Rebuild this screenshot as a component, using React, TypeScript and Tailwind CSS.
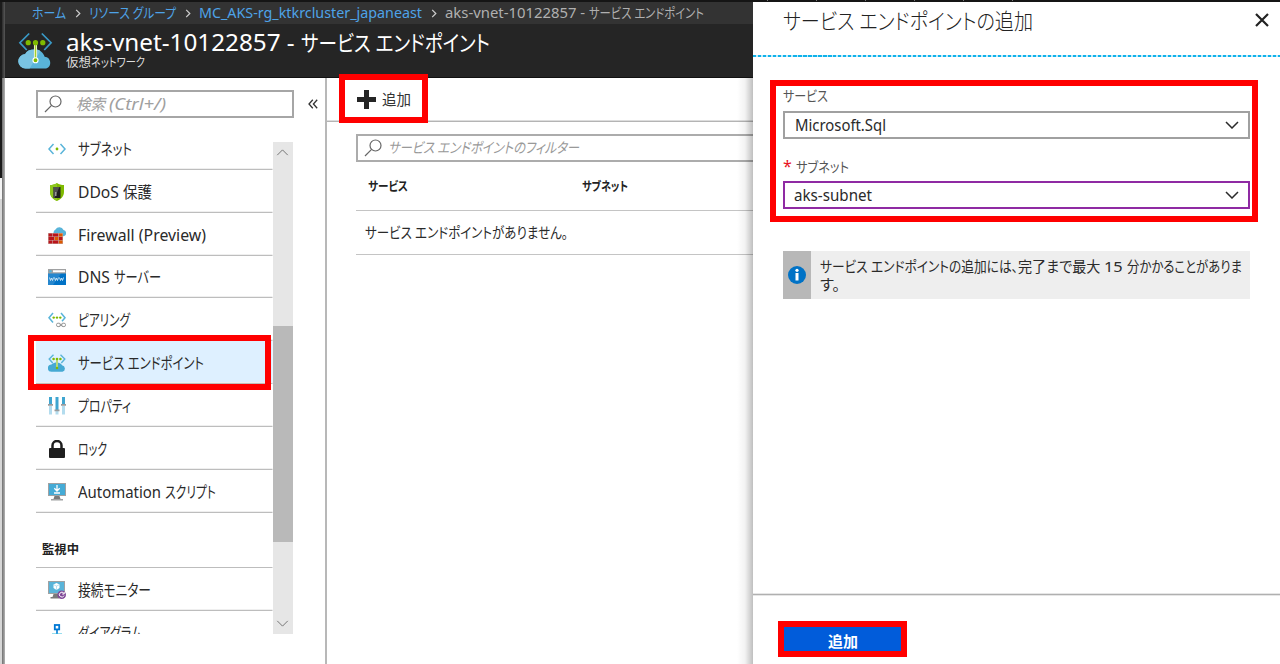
import { useLayoutEffect, useRef, type ReactNode } from "react";

/** A run of text that is condensed or widened to fill the given width. */
function Fit({ w, children, className = "" }: { w: number; children: string; className?: string }) {
  const outer = useRef<HTMLSpanElement>(null);
  const inner = useRef<HTMLSpanElement>(null);
  useLayoutEffect(() => {
    if (!outer.current || !inner.current) return;
    inner.current.style.transform = "none";
    const natural = inner.current.getBoundingClientRect().width;
    outer.current.style.width = `${w}px`;
    inner.current.style.transform = `scaleX(${w / natural})`;
  }, [w, children]);
  return (
    <span ref={outer} className={`inline-block shrink-0 whitespace-pre ${className}`}>
      <span ref={inner} className="inline-block origin-left">
        {children}
      </span>
    </span>
  );
}

function Chevron({ className }: { className: string }) {
  return (
    <svg viewBox="0 0 14 8" className={className} fill="none" stroke="currentColor">
      <path d="M1 1l6 6 6-6" />
    </svg>
  );
}

function SearchIcon() {
  return (
    <svg viewBox="0 0 18 18" className="size-[18px] shrink-0" fill="none" stroke="#666" strokeWidth="1.2">
      <circle cx="11.500" cy="6.500" r="5.500" />
      <path d="M7.600 10.400L1 17" />
    </svg>
  );
}

function EndpointLogo({ className }: { className: string }) {
  return (
    <svg viewBox="0 0 36 38" className={className}>
      <path d="M8 37a7.400 7.400 0 0 1-.6-14.800C9 19 12 17.500 17 17.500c6 0 9 3.500 10.400 7.300A6.300 6.300 0 0 1 29 37z" fill="#59b4d9" />
      <path d="M8 37a7.400 7.400 0 0 1-.6-14.800C9 19 12 17.500 17 17.500c3 0 4.500.5 6 1.500L12 37z" fill="#7ac3e1" />
      <path d="M11.500 1L2 10.500l7 7.500M24.500 1l9.500 9.500-7 7.500" fill="none" stroke="#3999c6" strokeWidth="1.800" />
      <path d="M18 11v17" stroke="#f0f8dc" strokeWidth="3.200" />
      <path d="M18 11v17" stroke="#a4cf30" strokeWidth="1.400" />
      <g fill="#7fba00">
        <circle cx="10.500" cy="10.500" r="2.700" />
        <circle cx="18" cy="10.500" r="2.700" />
        <circle cx="25.500" cy="10.500" r="2.700" />
      </g>
      <circle cx="18" cy="28.500" r="2.600" fill="#7fba00" stroke="#fff" strokeWidth="1.200" />
    </svg>
  );
}

function Icon18({ children }: { children: ReactNode }) {
  return (
    <svg viewBox="0 0 18 18" className="size-[18px] shrink-0" fill="none">
      {children}
    </svg>
  );
}

const icons = {
  subnet: (
    <Icon18>
      <path d="M5.500 4L1 9l4.500 5M12.500 4L17 9l-4.500 5" stroke="#59b4d9" strokeWidth="1.500" />
      <circle cx="9" cy="9" r="1.400" fill="#7fba00" />
    </Icon18>
  ),
  shield: (
    <Icon18>
      <path d="M9 0c2 1.500 4.500 2 7 2v7c0 4.500-3 7-7 9-4-2-7-4.500-7-9V2c2.500 0 5-.5 7-2z" fill="#7fba00" />
      <path d="M9 0v18c-4-2-7-4.500-7-9V2c2.500 0 5-.5 7-2z" fill="#8dc71e" />
      <path d="M5.500 4h7v11h-7z" fill="#1e1e1e" />
      <path d="M5.500 4h6l-5 11h-1z" fill="#505050" />
      <path d="M7 9h1.500v4H7z" fill="#999" />
    </Icon18>
  ),
  firewall: (
    <Icon18>
      <path d="M8 10a3.500 3.500 0 0 1-.5-6.500A4.500 4.500 0 0 1 15.500 4a3.200 3.200 0 0 1 0 6.300z" fill="#59b4d9" />
      <path d="M0 7h15v11H0z" fill="#c9a9a4" />
      <path d="M.6 7.600h3.800v2.900H.6zM5 7.600h5.300v2.900H5zM.6 11.100h5.600v2.900H.6zM11 11.100h3.500v2.900H11zM.6 14.600h3.800v2.900H.6zM5 14.600h5.300v2.900H5z" fill="#ba141a" />
      <path d="M11 7.600h3.500v2.900H11zM6.800 11.100h3.600v2.900H6.800zM11 14.600h3.500v2.900H11z" fill="#dd5900" />
    </Icon18>
  ),
  dns: (
    <Icon18>
      <path d="M0 1h18v16H0z" fill="#0072c6" />
      <path d="M0 1h18v4.500H0z" fill="#a0a1a2" />
      <path d="M5 2.200h12v2H5z" fill="#fff" />
      <circle cx="2.500" cy="3.200" r="1.200" fill="#59b4d9" />
      <path d="M0 5.500h13L5 17H0z" fill="#fff" opacity=".15" />
      <path d="M1.500 9.500l1 3 1-2.500 1 2.500 1-3M6.500 9.500l1 3 1-2.500 1 2.500 1-3M11.500 9.500l1 3 1-2.500 1 2.500 1-3" stroke="#d5ebf8" strokeWidth=".9" />
    </Icon18>
  ),
  peering: (
    <Icon18>
      <path d="M5 2L1 6.700 5 11.500M13 2l4 4.700-3 3.600" stroke="#59b4d9" strokeWidth="1.500" />
      <g fill="#7fba00">
        <circle cx="5.700" cy="6.600" r="1.200" />
        <circle cx="9" cy="6.600" r="1.200" />
        <circle cx="12.300" cy="6.600" r="1.200" />
      </g>
      <rect x="8.500" y="12.200" width="4" height="3.400" rx="1.500" stroke="#999" />
      <rect x="13.500" y="12.200" width="4" height="3.400" rx="1.500" stroke="#999" />
      <path d="M11.500 14h3" stroke="#888" />
    </Icon18>
  ),
  endpoint: (
    <Icon18>
      <path d="M3.500 17.800a3.500 3.500 0 0 1 0-7.200C5 9 7 8.500 9 8.500s4 1 5 2.700a3.400 3.400 0 0 1 .5 6.600z" fill="#45a9d3" />
      <path d="M5.500.8L1.200 5l3.500 4M12.500.8L16.800 5l-3.500 4" stroke="#59b4d9" strokeWidth="1.400" />
      <path d="M9 5v9" stroke="#b8d97a" strokeWidth="2" />
      <g fill="#7fba00">
        <circle cx="5.600" cy="5" r="1.300" />
        <circle cx="9" cy="5" r="1.300" />
        <circle cx="12.400" cy="5" r="1.300" />
        <circle cx="9" cy="14" r="1.300" />
      </g>
    </Icon18>
  ),
  properties: (
    <Icon18>
      <path d="M1 9h3v8.500H1zM7.500 14h3v3.500h-3zM14 9h3v8.500h-3z" fill="#b3dcee" />
      <path d="M1 0h3v7.500H1zM7.500 0h3v13h-3zM14 0h3v7.500h-3z" fill="#3fa5d0" />
      <path d="M0 7h5v1.800H0zM6.500 12.500h5v1.800h-5zM13 7h5v1.800h-5z" fill="#9a9b9c" />
    </Icon18>
  ),
  lock: (
    <Icon18>
      <rect x="1" y="8" width="16" height="10" rx="1" fill="#1e1e1e" />
      <path d="M4.500 9V5.500a4.500 4.500 0 0 1 9 0V9" stroke="#1e1e1e" strokeWidth="2.500" />
    </Icon18>
  ),
  script: (
    <Icon18>
      <path d="M0 0h18v13H0z" fill="#a0a1a2" />
      <path d="M1 1h16v11H1z" fill="#45abd6" />
      <path d="M6.500 13h5l1 3h-7z" fill="#7a7a7a" />
      <path d="M3 16h12v1.500H3z" fill="#a0a1a2" />
      <path d="M9 2v5.500M6.300 5.200L9 8l2.700-2.800M6 10h6" stroke="#fff" strokeWidth="1.300" />
    </Icon18>
  ),
  monitor: (
    <Icon18>
      <path d="M0 0h17v13H0z" fill="#a0a1a2" />
      <path d="M1 1h15v11H1z" fill="#59b4d9" />
      <path d="M5.500 13h5l1 3h-7zM2.500 16h9v1.500h-9z" fill="#7a7a7a" />
      <path d="M8.500 2l3 1.500v3.500l-3 2-3-2V3.500z" fill="#fff" />
      <path d="M5.800 3.800l2.700 1.300 2.700-1.300M8.500 5v4" stroke="#9fd3ea" strokeWidth=".7" />
      <circle cx="13.700" cy="13.700" r="4.300" fill="#804998" />
      <path d="M15.800 12.300a2.400 2.400 0 1 0 .2 2.300M16.200 11v2h-2" stroke="#fff" strokeWidth="1" />
    </Icon18>
  ),
  diagram: (
    <Icon18>
      <rect x="6.800" y="1" width="4.400" height="4.400" stroke="#0078d4" strokeWidth="1.800" />
      <path d="M9 6v4" stroke="#0078d4" strokeWidth="1.600" />
      <path d="M4 10.500h10" stroke="#32bedd" strokeWidth="2" />
    </Icon18>
  ),
};

type Run = [text: string, width: number];
type Item = { icon: keyof typeof icons; runs: Run[]; height: string; selected?: boolean };

const menu: Item[] = [
  { icon: "subnet", runs: [["サブネット", 54]], height: "h-[43px]" },
  { icon: "shield", runs: [["DDoS ", 45], ["保護", 29]], height: "h-[43px]" },
  { icon: "firewall", runs: [["Firewall (Preview)", 128]], height: "h-[43px]" },
  { icon: "dns", runs: [["DNS ", 36], ["サーバー", 47]], height: "h-[42px]" },
  { icon: "peering", runs: [["ピアリング", 52]], height: "h-[43px]" },
  { icon: "endpoint", runs: [["サービス エンドポイント", 126]], height: "h-[43px]", selected: true },
  { icon: "properties", runs: [["プロパティ", 53]], height: "h-[43px]" },
  { icon: "lock", runs: [["ロック", 29]], height: "h-[43px]" },
  { icon: "script", runs: [["Automation ", 87], ["スクリプト", 51]], height: "h-[43px]" },
];

const monitoring: Item[] = [
  { icon: "monitor", runs: [["接続モニター", 73]], height: "h-[43px]" },
  { icon: "diagram", runs: [["ダイアグラム", 64]], height: "h-[43px]" },
];

function MenuRow({ item }: { item: Item }) {
  return (
    <li
      className={`relative flex shrink-0 items-center border-b border-[#bdbdbd] pt-px pl-3 text-[15.500px] leading-5 text-[#2a2a2a] shadow-[0_-1px_0_#efefef_inset] ${item.height} ${item.selected ? "bg-[#def0ff]" : ""}`}
    >
      {icons[item.icon]}
      <span className="ml-3 flex">
        {item.runs.map(([text, width]) => (
          <Fit key={text} w={width}>
            {text}
          </Fit>
        ))}
      </span>
      {item.selected && <span className="absolute -top-[6px] -right-[-2px] -left-[8px] h-[55px] border-6 border-[#f00]" />}
    </li>
  );
}

function Sidebar() {
  return (
    <nav className="flex w-[321.500px] shrink-0 flex-col border-r-2 border-[#b8b8b8] bg-white pl-[30.500px]">
      <div className="mt-[12px] flex items-center">
        <div className="flex h-[28px] w-[258px] items-center border-2 border-[#a6a6a6] pl-[6px]">
          <SearchIcon />
          <span className="ml-[14px] flex text-[15.500px] leading-5 text-[#a0a0a0] italic">
            <Fit w={33}>検索 </Fit>
            <Fit w={57}>(Ctrl+/)</Fit>
          </span>
        </div>
        <svg viewBox="0 0 10 10" className="ml-[14.500px] size-[10px]" fill="none" stroke="#333" strokeWidth="1.300">
          <path d="M4.800.8L1 5l3.800 4.200M9.200.8L5.400 5l3.800 4.200" />
        </svg>
      </div>
      <div className="mt-[9px] flex h-[507px]">
        <div className="h-[507px] w-[237px] [clip-path:inset(0_0_0_-20px)]">
          <ul className="flex flex-col">
            {menu.map((item) => (
              <MenuRow key={item.icon} item={item} />
            ))}
          </ul>
          <h2 className="flex h-[55px] items-end border-b border-[#bdbdbd] pb-[8px] pl-[6px] text-[12.500px] leading-[18px] font-bold text-[#222]">
            <Fit w={37}>監視中</Fit>
          </h2>
          <ul className="flex flex-col">
            {monitoring.map((item) => (
              <MenuRow key={item.icon} item={item} />
            ))}
          </ul>
        </div>
        <div className="mt-[15px] flex h-[492px] w-[20.500px] flex-col items-center bg-[#e6e6e6] text-[#666]">
          <Chevron className="mt-[7px] h-[7px] w-[13px] shrink-0 rotate-180" />
          <div className="mt-[170px] h-[216px] w-full bg-[#b9b9b9]" />
          <Chevron className="mt-[78px] h-[7px] w-[13px] shrink-0" />
        </div>
      </div>
    </nav>
  );
}

function Content() {
  return (
    <main className="relative min-w-0 flex-1 bg-white">
      <div className="relative flex h-[44px] items-center border-b border-[#b4b4b4] pl-[30px] shadow-[0_-1px_0_#ddd_inset]">
        <svg viewBox="0 0 19 19" className="size-[19px]" fill="#252525">
          <path d="M7 0h5v7h7v5h-7v7H7v-7H0V7h7z" />
        </svg>
        <Fit w={29} className="-mt-[2px] ml-[6.500px] text-[14.500px] leading-5 text-[#333]">追加</Fit>
        <span className="absolute -top-[4px] left-[12.500px] h-[49px] w-[89px] border-6 border-[#f00]" />
      </div>
      <div className="ml-[29.500px]">
        <div className="mt-[12px] flex h-[28px] items-center border-2 border-r-0 border-[#acacac] pl-[6px] text-[14.500px] text-[#999] italic">
          <SearchIcon />
          <Fit w={191} className="ml-[6px]">サービス エンドポイントのフィルター</Fit>
        </div>
        <div className="flex h-[49px] items-center border-b border-[#c4c4c4] pt-[2px] pl-3 text-[12.500px] font-bold text-[#222]">
          <Fit w={40}>サービス</Fit>
          <Fit w={46} className="ml-[174px]">サブネット</Fit>
        </div>
        <div className="flex h-[44px] items-center border-b border-[#c4c4c4] pt-px pl-[9px] text-[14.500px] text-[#2a2a2a]">
          <Fit w={203}>サービス エンドポイントがありません。</Fit>
        </div>
      </div>
      <div className="absolute inset-y-0 right-0 w-[16px] bg-linear-to-r from-transparent via-black/5 to-black/25" />
    </main>
  );
}

function Select({ value, width, className }: { value: string; width: number; className: string }) {
  return (
    <div className={`flex h-[28px] items-center justify-between border-2 pr-[9px] text-[15.500px] leading-5 text-[#2a2a2a] ${className}`}>
      <Fit w={width} className="-mt-px">{value}</Fit>
      <Chevron className="h-[8px] w-[14px] [stroke-width:1.500]" />
    </div>
  );
}

function AddPanel() {
  return (
    <aside className="flex w-[527px] shrink-0 flex-col bg-white">
      <header className="flex h-[53px] items-start justify-between pt-[3px] pr-[11px] pl-[30px]">
        <Fit w={250} className="text-[22px] leading-[30px] font-light text-[#222]">サービス エンドポイントの追加</Fit>
        <svg viewBox="0 0 14 14" className="mt-[8px] size-[14px]" stroke="#222" strokeWidth="2.200">
          <path d="M1 1l12 12M13 1L1 13" />
        </svg>
      </header>
      <div className="h-[2px] bg-[repeating-linear-gradient(90deg,#10b2ea_0_3.500px,#bfeafa_3.500px_5px)]" />
      <div className="px-[30px]">
        <div className="relative pt-[31px]">
          <div className="flex h-[23px] items-start text-[14px] leading-[18px] text-[#555]">
            <Fit w={45} className="-mt-px">サービス</Fit>
          </div>
          <Select value="Microsoft.Sql" width={91} className="border-[#a0a0a0] pl-[10px]" />
          <div className="mt-[19px] flex h-[23px] items-start text-[14px] leading-[18px] text-[#555]">
            <span className="-mt-[2px] w-[13px] text-[16px] leading-5 text-[#e81123]">*</span>
            <Fit w={53}>サブネット</Fit>
          </div>
          <Select value="aks-subnet" width={78} className="border-[#8f2aa3] pl-[9px]" />
          <span className="absolute top-[23px] -right-[8px] -left-[13px] h-[142px] border-6 border-[#f00]" />
        </div>
        <div className="mt-[42px] flex h-[48px] bg-[#eee]">
          <div className="flex w-[28px] items-center justify-center bg-[#b8b8b8]">
            <svg viewBox="0 0 18 18" className="-mt-px size-[18px]">
              <circle cx="9" cy="9" r="9" fill="#0072c6" />
              <circle cx="9" cy="4.300" r="1.600" fill="#fff" />
              <path d="M7.500 7h3v7.500h-3z" fill="#fff" />
            </svg>
          </div>
          <div className="flex flex-col pt-[6px] pl-[9px] text-[14.500px] leading-[18px] text-[#2a2a2a]">
            <div className="flex">
              <Fit w={198}>サービス エンドポイントの追加には、</Fit>
              <Fit w={86}>完了まで最大 </Fit>
              <Fit w={23}>15 </Fit>
              <Fit w={115}>分かかることがありま</Fit>
            </div>
            <Fit w={20}>す。</Fit>
          </div>
        </div>
      </div>
      <footer className="mt-auto h-[70px] border-t border-[#b0b0b0] pt-[27px] pl-[25px] shadow-[0_1px_0_#e6e6e6_inset,0_-1px_0_#e6e6e6]">
        <button className="-mt-px flex h-[36px] w-[129px] items-center justify-center border-6 border-[#f00] bg-[#015cda] pt-[3px] text-[14.500px] leading-5 font-bold text-white">
          <Fit w={30}>追加</Fit>
        </button>
      </footer>
    </aside>
  );
}

function Separator() {
  return (
    <svg viewBox="0 0 6 10" className="mx-[8.500px] h-[9px] w-[6px] shrink-0" fill="none" stroke="#ccc" strokeWidth="1.400">
      <path d="M1 1l4 4-4 4" />
    </svg>
  );
}

export default function App() {
  return (
    <div className="flex h-[664px] w-[1280px] flex-col overflow-hidden bg-[#151515] font-['Noto_Sans','Noto_Sans_CJK_JP',sans-serif] [font-feature-settings:'palt']">
      <div className="flex h-[2px] shrink-0 gap-[48px] pl-[767px]">
        {[0, 1, 2, 3, 4, 5].map((tick) => (
          <span key={tick} className="h-px w-px bg-[#777]" />
        ))}
      </div>
      <div className="flex min-h-0 flex-1">
        <div className="flex w-[2px] shrink-0 flex-col">
          <div className="h-[176px] bg-[#1b1b1b]" />
          <div className="h-[21px] bg-[#f4f4f4]" />
          <div className="flex-1 bg-[#d6d6d6]" />
        </div>
        <div className="flex w-[3px] shrink-0 flex-col">
          <div className="h-[76px] bg-linear-to-r from-[#2c2c2c] to-[#585858]" />
          <div className="flex-1 bg-linear-to-r from-[#707070] to-[#b4b4b4]" />
        </div>
        <div className="flex min-w-0 flex-1 flex-col">
          <div className="flex h-[22px] items-center bg-[#333] pl-[27px] text-[13.500px] leading-5 text-[#4ea3e8]">
            <Fit w={34}>ホーム</Fit>
            <Separator />
            <Fit w={87}>リソース グループ</Fit>
            <Separator />
            <Fit w={223}>MC_AKS-rg_ktkrcluster_japaneast</Fit>
            <Separator />
            <span className="flex text-[#b0b0b0]">
              <Fit w={144}>aks-vnet-10122857 - </Fit>
              <Fit w={115}>サービス エンドポイント</Fit>
            </span>
          </div>
          <div className="flex h-[54px] border-b border-[#111] bg-[#252525] pl-[13px]">
            <EndpointLogo className="mt-[8px] h-[38px] w-[35px]" />
            <div className="ml-[13px] flex flex-col">
              <div className="mt-[6px] flex text-[23px] leading-[24px] text-white">
                <Fit w={235}>aks-vnet-10122857 - </Fit>
                <Fit w={189} className="text-[22px]">サービス エンドポイント</Fit>
              </div>
              <div className="mt-px flex text-[12px] leading-4 text-[#ddd]">
                <Fit w={25}>仮想</Fit>
                <Fit w={54}>ネットワーク</Fit>
              </div>
            </div>
          </div>
          <div className="flex min-h-0 flex-1">
            <Sidebar />
            <Content />
          </div>
        </div>
        <AddPanel />
      </div>
    </div>
  );
}
